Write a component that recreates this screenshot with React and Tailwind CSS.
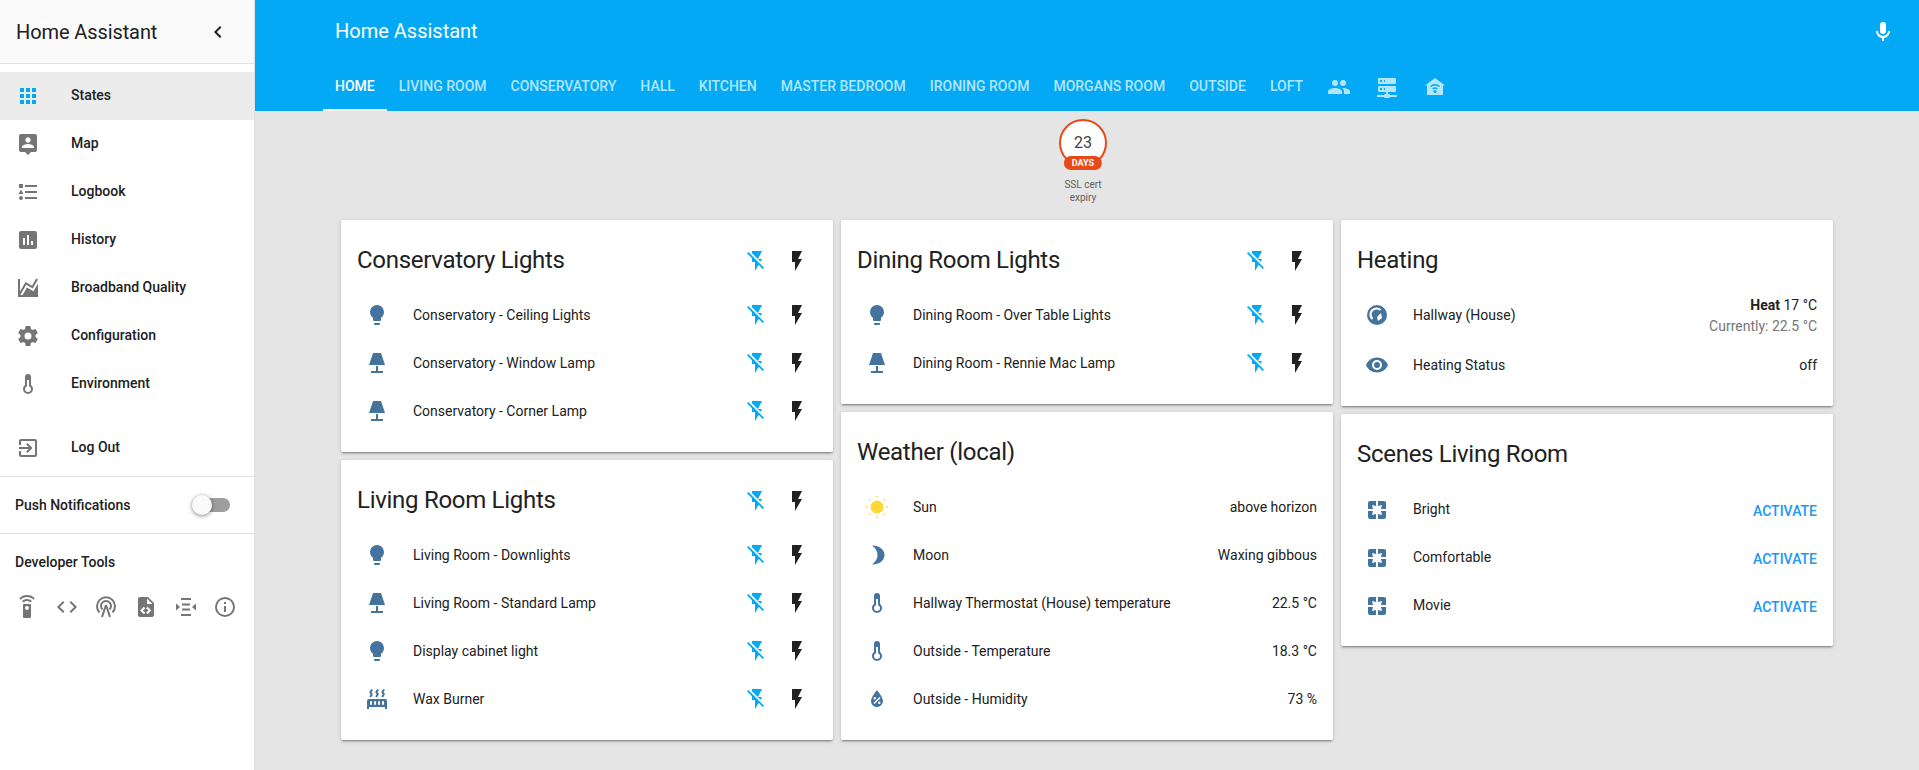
const I = {
  flash: 'M7,2V13H10V22L17,10H13L17,2H7Z',
  flashOff: 'M17,10H13L17,2H7V4.18L15.46,12.64M3.27,3L2,4.27L7,9.27V13H10V22L13.58,15.86L17.73,20L19,18.73L3.27,3Z',
  bulb: 'M12,2A7,7 0 0,0 5,9C5,11.38 6.19,13.47 8,14.74V17A1,1 0 0,0 9,18H15A1,1 0 0,0 16,17V14.74C17.81,13.47 19,11.38 19,9A7,7 0 0,0 12,2M9,21A1,1 0 0,0 10,22H14A1,1 0 0,0 15,21V20H9V21Z',
  lamp: 'M8,2H16L20,14H4L8,2M11,15H13V20H18V22H6V20H11V15Z',
  apps: 'M16,20H20V16H16M16,14H20V10H16M10,8H14V4H10M16,8H20V4H16M10,14H14V10H10M4,14H8V10H4M4,20H8V16H4M10,20H14V16H10M4,8H8V4H4V8Z',
  map: 'M18,16H6V15.1C6,13.1 10,12 12,12C14,12 18,13.1 18,15.1M12,5.3C13.5,5.3 14.7,6.5 14.7,8C14.7,9.5 13.5,10.7 12,10.7C10.5,10.7 9.3,9.5 9.3,8C9.3,6.5 10.5,5.3 12,5.3M19,2H5C3.89,2 3,2.89 3,4V18A2,2 0 0,0 5,20H9L12,23L15,20H19A2,2 0 0,0 21,18V4C21,2.89 20.1,2 19,2Z',
  list: 'M5,9.5L7.5,14H2.5L5,9.5M3,4H7V8H3V4M5,20A2,2 0 0,0 7,18A2,2 0 0,0 5,16A2,2 0 0,0 3,18A2,2 0 0,0 5,20M9,5V7H21V5H9M9,19H21V17H9V19M9,13H21V11H9V13Z',
  poll: 'M17,17H15V13H17M13,17H11V7H13M9,17H7V10H9M19,3H5C3.89,3 3,3.89 3,5V19A2,2 0 0,0 5,21H19A2,2 0 0,0 21,19V5C21,3.89 20.1,3 19,3Z',
  chart: 'M22,21H2V3H4V15.54L9.5,6L16,9.75L20.24,2.42L21.97,3.42L16.74,12.5L10.23,8.75L4.31,19H6.57L10.96,11.44L17.47,15.22L22,7.39V21Z',
  cog: 'M12,15.5A3.5,3.5 0 0,1 8.5,12A3.5,3.5 0 0,1 12,8.5A3.5,3.5 0 0,1 15.5,12A3.5,3.5 0 0,1 12,15.5M19.43,12.97C19.47,12.65 19.5,12.33 19.5,12C19.5,11.67 19.47,11.34 19.43,11L21.54,9.37C21.73,9.22 21.78,8.95 21.66,8.73L19.66,5.27C19.54,5.05 19.27,4.96 19.05,5.05L16.56,6.05C16.04,5.66 15.5,5.32 14.87,5.07L14.5,2.42C14.46,2.18 14.25,2 14,2H10C9.75,2 9.54,2.18 9.5,2.42L9.13,5.07C8.5,5.32 7.96,5.66 7.44,6.05L4.95,5.05C4.73,4.96 4.46,5.05 4.34,5.27L2.34,8.73C2.21,8.95 2.27,9.22 2.46,9.37L4.57,11C4.53,11.34 4.5,11.67 4.5,12C4.5,12.33 4.53,12.65 4.57,12.97L2.46,14.63C2.27,14.78 2.21,15.05 2.34,15.27L4.34,18.73C4.46,18.95 4.73,19.03 4.95,18.95L7.44,17.94C7.96,18.34 8.5,18.68 9.13,18.93L9.5,21.58C9.54,21.82 9.75,22 10,22H14C14.25,22 14.46,21.82 14.5,21.58L14.87,18.93C15.5,18.67 16.04,18.34 16.56,17.94L19.05,18.95C19.27,19.03 19.54,18.95 19.66,18.73L21.66,15.27C21.78,15.05 21.73,14.78 21.54,14.63L19.43,12.97Z',
  thermo: 'M17,17A5,5 0 0,1 12,22A5,5 0 0,1 7,17C7,15.36 7.79,13.91 9,13V5A3,3 0 0,1 12,2A3,3 0 0,1 15,5V13C16.21,13.91 17,15.36 17,17M11,8V14.17C9.83,14.58 9,15.69 9,17A3,3 0 0,0 12,20A3,3 0 0,0 15,17C15,15.69 14.17,14.58 13,14.17V8H11Z',
  exit: 'M19,3H5C3.89,3 3,3.89 3,5V9H5V5H19V19H5V15H3V19A2,2 0 0,0 5,21H19A2,2 0 0,0 21,19V5C21,3.89 20.1,3 19,3M10.08,15.58L11.5,17L16.5,12L11.5,7L10.08,8.41L12.67,11H3V13H12.67L10.08,15.58Z',
  remote: 'M12,0C8.96,0 6.21,1.23 4.22,3.22L5.63,4.63C7.26,3 9.5,2 12,2C14.5,2 16.74,3 18.36,4.64L19.77,3.23C17.79,1.23 15.04,0 12,0M7.05,6.05L8.46,7.46C9.37,6.56 10.62,6 12,6C13.38,6 14.63,6.56 15.54,7.46L16.95,6.05C15.68,4.78 13.93,4 12,4C10.07,4 8.32,4.78 7.05,6.05M12,15A2,2 0 0,1 10,13A2,2 0 0,1 12,11A2,2 0 0,1 14,13A2,2 0 0,1 12,15M15,9H9A1,1 0 0,0 8,10V22A1,1 0 0,0 9,23H15A1,1 0 0,0 16,22V10A1,1 0 0,0 15,9Z',
  code: 'M14.6,16.6L19.2,12L14.6,7.4L16,6L22,12L16,18L14.6,16.6M9.4,16.6L4.8,12L9.4,7.4L8,6L2,12L8,18L9.4,16.6Z',
  fileXml: 'M13,9H18.5L13,3.5V9M6,2H14L20,8V20A2,2 0 0,1 18,22H6C4.89,22 4,21.1 4,20V4C4,2.89 4.89,2 6,2M6.12,15.5L9.86,19.24L11.28,17.83L8.95,15.5L11.28,13.17L9.86,11.76L6.12,15.5M17.28,15.5L13.54,11.76L12.12,13.17L14.45,15.5L12.12,17.83L13.54,19.24L17.28,15.5Z',
  mqtt: 'M7,3H17V5H7V3M8,8.5H16V10.5H8V8.5M8,13.5H16V15.5H8V13.5M7,19H17V21H7V19M2,8.5L6,12L2,15.5V8.5M22,8.5V15.5L18,12L22,8.5Z',
  info: 'M11,9H13V7H11M12,20C7.59,20 4,16.41 4,12C4,7.59 7.59,4 12,4C16.41,4 20,7.59 20,12C20,16.41 16.41,20 12,20M12,2A10,10 0 0,0 2,12A10,10 0 0,0 12,22A10,10 0 0,0 22,12A10,10 0 0,0 12,2M11,17H13V11H11V17Z',
  mic: 'M12,2A3,3 0 0,1 15,5V11A3,3 0 0,1 12,14A3,3 0 0,1 9,11V5A3,3 0 0,1 12,2M19,11C19,14.53 16.39,17.44 13,17.93V21H11V17.93C7.61,17.44 5,14.53 5,11H7A5,5 0 0,0 12,16A5,5 0 0,0 17,11H19Z',
  chevron: 'M15.41,16.58L10.83,12L15.41,7.41L14,6L8,12L14,18L15.41,16.58Z',
  people: 'M16,13C15.71,13 15.38,13 15.03,13.05C16.19,13.89 17,15 17,16.5V19H23V16.5C23,14.17 18.33,13 16,13M8,13C5.67,13 1,14.17 1,16.5V19H15V16.5C15,14.17 10.33,13 8,13M8,11A3,3 0 0,0 11,8A3,3 0 0,0 8,5A3,3 0 0,0 5,8A3,3 0 0,0 8,11M16,11A3,3 0 0,0 19,8A3,3 0 0,0 16,5A3,3 0 0,0 13,8A3,3 0 0,0 16,11Z',
  server: 'M13,19H14A1,1 0 0,1 15,20H22V22H15A1,1 0 0,1 14,23H10A1,1 0 0,1 9,22H2V20H9A1,1 0 0,1 10,19H11V17H4A1,1 0 0,1 3,16V12A1,1 0 0,1 4,11H20A1,1 0 0,1 21,12V16A1,1 0 0,1 20,17H13V19M4,3H20A1,1 0 0,1 21,4V8A1,1 0 0,1 20,9H4A1,1 0 0,1 3,8V4A1,1 0 0,1 4,3M9,7H10V5H9V7M9,15H10V13H9V15M5,5V7H7V5H5M5,13V15H7V13H5Z',
  radiator: 'M7.95,3L6.53,5.19L7.95,7.4H7.94L5.95,10.5L4.22,9.6L5.64,7.39L4.22,5.19L6.22,2.09L7.95,3M13.95,2.89L12.53,5.1L13.95,7.3L13.94,7.31L11.95,10.4L10.22,9.5L11.64,7.3L10.22,5.1L12.22,2L13.95,2.89M20,2.89L18.56,5.1L20,7.3V7.31L18,10.4L16.25,9.5L17.67,7.3L16.25,5.1L18.25,2L20,2.89M2,22V14A2,2 0 0,1 4,12H20A2,2 0 0,1 22,14V22H20V20H4V22H2M6,14A1,1 0 0,0 5,15V17A1,1 0 0,0 6,18A1,1 0 0,0 7,17V15A1,1 0 0,0 6,14M10,14A1,1 0 0,0 9,15V17A1,1 0 0,0 10,18A1,1 0 0,0 11,17V15A1,1 0 0,0 10,14M14,14A1,1 0 0,0 13,15V17A1,1 0 0,0 14,18A1,1 0 0,0 15,17V15A1,1 0 0,0 14,14M18,14A1,1 0 0,0 17,15V17A1,1 0 0,0 18,18A1,1 0 0,0 19,17V15A1,1 0 0,0 18,14Z',
  moon: 'M7,2.5C13,2 19.5,6 19.5,12C19.5,18 13,22 7,21.5C10.5,19 12.5,16 12.5,12C12.5,8 10.5,5 7,2.5Z',
  water: 'M12,3.25C12,3.25 6,10 6,14C6,17.32 8.69,20 12,20A6,6 0 0,0 18,14C18,10 12,3.25 12,3.25M14.47,9.97L15.53,11.03L9.53,17.03L8.47,15.97M9.75,10A1.25,1.25 0 0,1 11,11.25A1.25,1.25 0 0,1 9.75,12.5A1.25,1.25 0 0,1 8.5,11.25A1.25,1.25 0 0,1 9.75,10M14.25,14.5A1.25,1.25 0 0,1 15.5,15.75A1.25,1.25 0 0,1 14.25,17A1.25,1.25 0 0,1 13,15.75A1.25,1.25 0 0,1 14.25,14.5Z',
  eye: 'M12,9A3,3 0 0,0 9,12A3,3 0 0,0 12,15A3,3 0 0,0 15,12A3,3 0 0,0 12,9M12,17A5,5 0 0,1 7,12A5,5 0 0,1 12,7A5,5 0 0,1 17,12A5,5 0 0,1 12,17M12,4.5C7,4.5 2.73,7.61 1,12C2.73,16.39 7,19.5 12,19.5C17,19.5 21.27,16.39 23,12C21.27,7.61 17,4.5 12,4.5Z',
  scene: 'M19,3H13V8L17,7L16,11H21V5C21,3.89 20.1,3 19,3M17,17L13,16V21H19A2,2 0 0,0 21,19V13H16M8,13H3V19A2,2 0 0,0 5,21H11V16L7,17M3,5V11H8L7,7L11,8V3H5C3.89,3 3,3.89 3,5Z',
}

function Icon({ d, className = '' }) {
  return (
    <svg viewBox="0 0 24 24" className={`w-6 h-6 shrink-0 fill-current ${className}`}>
      <path d={d} />
    </svg>
  )
}

function Sun() {
  return (
    <svg viewBox="0 0 24 24" className="w-6 h-6 shrink-0 text-[#fdd835]">
      <circle cx="12" cy="12" r="6.5" fill="currentColor" />
      <path d="M12,1V2.6M12,21.4V23M1,12H2.6M21.4,12H23M4.2,4.2L5.3,5.3M18.7,18.7L19.8,19.8M4.2,19.8L5.3,18.7M18.7,5.3L19.8,4.2" stroke="currentColor" strokeWidth="1.6" fill="none" />
    </svg>
  )
}

function Thermostat() {
  return (
    <svg viewBox="0 0 24 24" className="w-6 h-6 shrink-0 text-[#44739e]">
      <circle cx="12" cy="12" r="10" fill="currentColor" />
      <path d="M7.5,16A6,6 0 0,1 15.5,7" stroke="#fff" strokeWidth="2.2" fill="none" />
      <path d="M16,10L12,14L13,18L17,15Z" fill="#fff" />
    </svg>
  )
}

function Tower() {
  return (
    <svg viewBox="0 0 24 24" className="w-6 h-6 shrink-0 text-[#757575]" fill="none" stroke="currentColor" strokeWidth="2">
      <path d="M5.5,17.5A9,9 0 1,1 18.5,17.5" />
      <path d="M8.5,14.5A5,5 0 1,1 15.5,14.5" />
      <path d="M12,10L8,22M12,10L16,22" />
    </svg>
  )
}

function HomeWifi() {
  return (
    <svg viewBox="0 0 24 24" className="w-6 h-6 shrink-0 text-[#b3e5fc]">
      <path d="M12,3L22,10.5H20V20H4V10.5H2Z" fill="currentColor" />
      <path d="M7.5,11.5A6.5,6.5 0 0,1 16.5,11.5M9.7,14A3.4,3.4 0 0,1 14.3,14" stroke="#03a9f4" strokeWidth="1.5" fill="none" />
      <circle cx="12" cy="16.5" r="1.6" fill="#03a9f4" />
    </svg>
  )
}

const tabs = ['LIVING ROOM', 'CONSERVATORY', 'HALL', 'KITCHEN', 'MASTER BEDROOM', 'IRONING ROOM', 'MORGANS ROOM', 'OUTSIDE', 'LOFT']

const navItems = [
  { label: 'States', d: I.apps, active: true },
  { label: 'Map', d: I.map },
  { label: 'Logbook', d: I.list },
  { label: 'History', d: I.poll },
  { label: 'Broadband Quality', d: I.chart },
  { label: 'Configuration', d: I.cog },
  { label: 'Environment', d: I.thermo },
]

function Sidebar() {
  return (
    <aside className="w-[255px] shrink-0 h-[770px] bg-white border-r border-[#e0e0e0] flex flex-col text-[#212121] text-sm font-medium">
      <div className="h-[64px] shrink-0 bg-[#fafafa] border-b border-[#e0e0e0] flex items-center pl-4 pr-[14px] justify-between">
        <span className="text-xl font-normal tracking-[-0.1px]">Home Assistant</span>
        <Icon d={I.chevron} className="text-[#212121] mr-[10px]" />
      </div>
      <nav className="pt-2">
        {navItems.map(n => (
          <div key={n.label} className={`h-12 flex items-center pl-4 ${n.active ? 'bg-[#ececec]' : ''}`}>
            <Icon d={n.d} className={`mr-[31px] ${n.active ? 'text-[#03a9f4]' : 'text-[#757575]'}`} />
            <span className="pb-[2px]">{n.label}</span>
          </div>
        ))}
      </nav>
      <div className="h-12 mt-4 flex items-center pl-4">
        <Icon d={I.exit} className="mr-[31px] text-[#757575]" />
        <span className="pb-[2px]">Log Out</span>
      </div>
      <div className="mt-[4px] border-t border-[#e0e0e0] h-[57px] flex items-center justify-between pl-[15px] pr-[24px]">
        <span>Push Notifications</span>
        <div className="relative w-[36px] h-[14px] rounded-full bg-[#9e9e9e]">
          <div className="absolute -left-[2px] -top-[3px] w-5 h-5 rounded-full bg-[#fafafa] shadow-[0_1px_4px_rgba(0,0,0,0.5)]" />
        </div>
      </div>
      <div className="border-t border-[#e0e0e0] pt-[18px] pl-[15px]">Developer Tools</div>
      <div className="flex items-center gap-[15.7px] pl-[15px] mt-[23px] text-[#757575]">
        <Icon d={I.remote} />
        <Icon d={I.code} />
        <Tower />
        <Icon d={I.fileXml} />
        <Icon d={I.mqtt} />
        <Icon d={I.info} />
      </div>
    </aside>
  )
}

function Header() {
  return (
    <header className="h-[111px] shrink-0 bg-[#03a9f4] flex flex-col">
      <div className="h-[63px] flex items-center justify-between pl-[80px] pr-[24px] text-white">
        <span className="text-xl pb-[1px]">Home Assistant</span>
        <Icon d={I.mic} />
      </div>
      <div className="h-[48px] flex items-stretch pl-[68px] text-sm font-medium text-[#b3e5fc]">
        <div className="relative flex items-center px-3 pb-[2px] text-white">
          HOME
          <div className="absolute left-0 right-0 bottom-0 h-[2px] bg-white" />
        </div>
        {tabs.map(t => (
          <div key={t} className="flex items-center px-3 pb-[2px]">{t}</div>
        ))}
        <div className="flex items-center px-3"><Icon d={I.people} /></div>
        <div className="flex items-center px-3"><Icon d={I.server} /></div>
        <div className="flex items-center px-3"><HomeWifi /></div>
      </div>
    </header>
  )
}

function Badge() {
  return (
    <div className="flex flex-col items-center h-[109px] pt-[8px] pr-[8px] text-[#212121]">
      <div className="relative w-[48px] h-[48px] rounded-full border-2 border-[#e64a19] bg-white flex items-center justify-center text-base text-[#424242]">
        23
        <div className="absolute -bottom-[5px] left-1/2 -translate-x-1/2 h-[14px] px-[8px] rounded-full bg-[#e64a19] text-white text-[9px] font-bold leading-[14px]">DAYS</div>
      </div>
      <div className="mt-[11px] w-[60px] text-center text-[10px] leading-[13px] text-[#616161]">SSL cert expiry</div>
    </div>
  )
}

function Card({ title, toggles, headClass = 'h-[71px]', bodyClass = 'pb-[17px]', className = '', children }) {
  return (
    <section className={`bg-white rounded-[2px] shadow-[0_2px_2px_rgba(0,0,0,0.14),0_1px_5px_rgba(0,0,0,0.12),0_3px_1px_-2px_rgba(0,0,0,0.2)] ${className}`}>
      <div className={`flex items-start justify-between pl-4 pr-[16px] pt-[24px] ${headClass}`}>
        <h2 className="text-2xl leading-[32px] font-normal tracking-[-0.012em] text-[#212121]">{title}</h2>
        {toggles && <Toggles className="mt-[5px]" />}
      </div>
      <div className={`px-4 ${bodyClass}`}>{children}</div>
    </section>
  )
}

function Toggles({ className = '' }) {
  return (
    <div className={`flex items-center gap-4 mr-[8px] ${className}`}>
      <Icon d={I.flashOff} className="text-[#03a9f4]" />
      <Icon d={I.flash} className="text-[#212121]" />
    </div>
  )
}

function Row({ icon, d, label, right, labelClass = '' }) {
  return (
    <div className="h-12 flex items-center text-sm text-[#212121]">
      <div className="w-[40px] pl-2 flex items-center shrink-0">
        {icon || <Icon d={d} className="text-[#44739e]" />}
      </div>
      <div className={`ml-[16px] flex-1 truncate ${labelClass}`}>{label}</div>
      {right}
    </div>
  )
}

function LightCard({ title, rows, className }) {
  return (
    <Card title={title} toggles className={className}>
      {rows.map(([label, d]) => (
        <Row key={label} d={d} label={label} right={<Toggles />} />
      ))}
    </Card>
  )
}

function Scene({ label }) {
  return (
    <Row
      d={I.scene}
      label={label}
      labelClass="-mt-[2px]"
      right={<span className="text-sm font-medium text-[#2196f3] mt-[2px]">ACTIVATE</span>}
    />
  )
}

export default function App() {
  return (
    <div className="flex h-[770px] overflow-hidden bg-[#e5e5e5]" style={{ fontFamily: 'Roboto, sans-serif' }}>
      <Sidebar />
      <main className="flex-1 flex flex-col min-w-0">
        <Header />
        <Badge />
        <div className="grid grid-cols-[492px_492px_492px] gap-2 pl-[86px]">
          <div className="flex flex-col gap-2">
            <LightCard
              title="Conservatory Lights"
              rows={[
                ['Conservatory - Ceiling Lights', I.bulb],
                ['Conservatory - Window Lamp', I.lamp],
                ['Conservatory - Corner Lamp', I.lamp],
              ]}
            />
            <LightCard
              title="Living Room Lights"
              rows={[
                ['Living Room - Downlights', I.bulb],
                ['Living Room - Standard Lamp', I.lamp],
                ['Display cabinet light', I.bulb],
                ['Wax Burner', I.radiator],
              ]}
            />
          </div>
          <div className="flex flex-col gap-2">
            <LightCard
              title="Dining Room Lights"
              rows={[
                ['Dining Room - Over Table Lights', I.bulb],
                ['Dining Room - Rennie Mac Lamp', I.lamp],
              ]}
            />
            <Card title="Weather (local)">
              <Row icon={<Sun />} label="Sun" right={<span>above horizon</span>} />
              <Row d={I.moon} label="Moon" right={<span>Waxing gibbous</span>} />
              <Row d={I.thermo} label="Hallway Thermostat (House) temperature" right={<span>22.5 °C</span>} />
              <Row d={I.thermo} label="Outside - Temperature" right={<span>18.3 °C</span>} />
              <Row d={I.water} label="Outside - Humidity" right={<span>73 %</span>} />
            </Card>
          </div>
          <div className="flex flex-col gap-2">
            <Card title="Heating" headClass="h-[69px]">
              <div className="h-[52px] flex items-center text-sm text-[#212121]">
                <div className="w-[40px] pl-2 shrink-0"><Thermostat /></div>
                <div className="ml-[16px] flex-1">Hallway (House)</div>
                <div className="text-right leading-[21px] mt-[2px]">
                  <div><span className="font-bold">Heat</span> 17 °C</div>
                  <div className="text-[#757575]">Currently: 22.5 °C</div>
                </div>
              </div>
              <Row d={I.eye} label="Heating Status" right={<span>off</span>} />
            </Card>
            <Card title="Scenes Living Room" headClass="h-[72px]" bodyClass="pb-[16px]">
              <Scene label="Bright" />
              <Scene label="Comfortable" />
              <Scene label="Movie" />
            </Card>
          </div>
        </div>
      </main>
    </div>
  )
}
